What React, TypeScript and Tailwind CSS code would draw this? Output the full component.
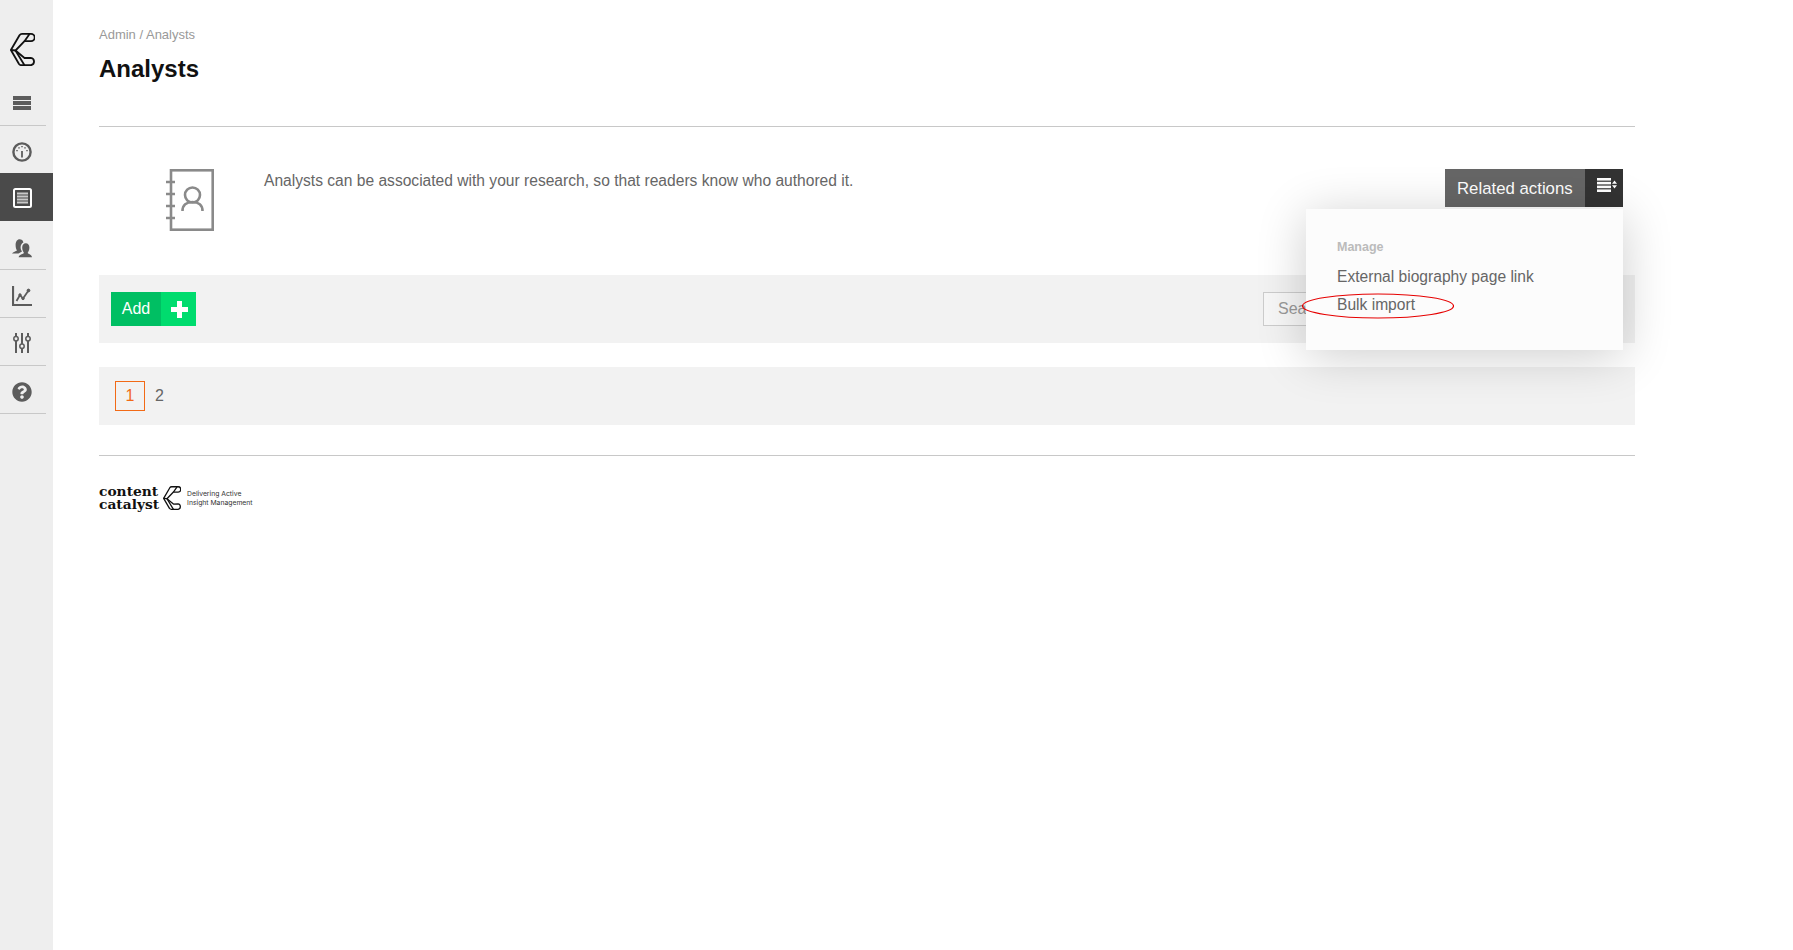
import React from "react";
import { FaQuestionCircle } from "react-icons/fa";

function Logo({ className }: { className: string }) {
  return (
    <svg viewBox="0 0 25 33" className={className} fill="none" stroke="currentColor" strokeWidth="1.8" strokeLinejoin="round">
      <path d="M0.9 17 L9.5 2.2 Q10.4 0.9 12 0.9 H21 A3.6 3.6 0 0 1 21 8.2 H14.5 L5.5 17.5 L14.5 25 L20.8 24.8 A3.75 3.75 0 0 1 21 32.2 H11.5 Q10 32.2 9 31 Z" />
      <path d="M0.9 17 L5.5 17.5 M5.5 17.5 L14.5 32.2 M14.5 8.2 L19.5 1" />
    </svg>
  );
}

function NavRule() {
  return <div className="h-px w-[46px] bg-[#c8c8c8]" />;
}

function NavCell({ active, children, className }: { active?: boolean; children: React.ReactNode; className: string }) {
  return (
    <div className={`flex items-center justify-center ${active ? "bg-[#4a4a4a] text-white" : "text-[#5c5c5c]"} ${className}`}>
      {children}
    </div>
  );
}

export default function App() {
  return (
    <div className="flex min-h-[950px] bg-white font-['Liberation_Sans',Arial,sans-serif] text-[#666]">
      <aside className="w-[53px] shrink-0 bg-[#eeeeee]">
        <div className="flex h-[82px] w-[45px] items-start justify-center pt-[33px] text-[#111]">
          <Logo className="h-[33px] w-[25px]" />
        </div>
        <NavCell className="h-[43px] w-[44px] pb-[1px]">
          <svg viewBox="0 0 18 14" className="h-[14px] w-[18px]" fill="currentColor">
            <rect width="18" height="4" />
            <rect y="5" width="18" height="4" />
            <rect y="10" width="18" height="4" />
          </svg>
        </NavCell>
        <NavRule />
        <NavCell className="h-[47px] w-[44px] pt-[5px]">
          <svg viewBox="0 0 20 20" className="h-[20px] w-[20px]" fill="none" stroke="currentColor">
            <circle cx="10" cy="10" r="8.6" strokeWidth="2.4" />
            <path d="M10 9 V15.5" strokeWidth="1.8" />
            <path d="M5 8 V9.2 M7 5.2 V6.4 M10 4 V5.2 M13 5.2 V6.4 M15 8 V9.2" strokeWidth="1.5" />
          </svg>
        </NavCell>
        <NavCell active className="h-[48px] w-[53px] pr-[9px] pt-[2px]">
          <svg viewBox="0 0 19 20" className="h-[20px] w-[19px]">
            <rect x="1" y="1" width="17" height="18" rx="1.5" fill="#4a4a4a" stroke="#fff" strokeWidth="2" />
            <path d="M4 5.5 H15 M4 8.5 H15 M4 11.5 H15 M4 14.5 H15" stroke="#c9c9c9" strokeWidth="2" />
          </svg>
        </NavCell>
        <NavCell className="h-[48px] w-[44px] pt-[6px]">
          <svg viewBox="0 0 20 20" className="h-[20px] w-[20px]" fill="currentColor">
            <path d="M0 15.5 C1 14 4 13.5 5 12.6 C4.2 11 3.6 9.6 3.6 7 C3.6 3.6 5.2 1.2 7.6 1.2 C9.6 1.2 11 2.4 11.4 4.4 C9.6 5.2 8.6 7 8.6 9.2 C8.6 11 9.2 12.4 10 13.4 C8.8 14 7.6 14.6 6.6 15.5 Z" />
            <path d="M6.6 19.2 C7 16.8 10.6 16.2 12 15 C11 13.6 10.2 12 10.2 9.6 C10.2 7 11.6 5.2 13.8 5.2 C16 5.2 17.4 7 17.4 9.6 C17.4 12 16.6 13.6 15.6 15 C17 16.2 19.6 16.8 20 19.2 Z" />
          </svg>
        </NavCell>
        <NavRule />
        <NavCell className="h-[47px] w-[44px] pt-[5px]">
          <svg viewBox="0 0 20 20" className="h-[20px] w-[20px]" fill="none" stroke="currentColor">
            <path d="M1 0 V19 H20" strokeWidth="2.2" />
            <path d="M4.5 15 L8 9 L11 12.5 L16.5 4.5" strokeWidth="1.8" />
            <circle cx="8" cy="9" r="1.2" fill="currentColor" />
            <circle cx="11" cy="12.5" r="1.2" fill="currentColor" />
            <circle cx="16.5" cy="4.5" r="1.4" fill="currentColor" />
          </svg>
        </NavCell>
        <NavRule />
        <NavCell className="h-[47px] w-[44px] pt-[3px]">
          <svg viewBox="0 0 18 20" className="h-[20px] w-[18px]" fill="none" stroke="currentColor" strokeWidth="2">
            <path d="M3 0 V3.5 M3 8 V20 M9 0 V11 M9 15.5 V20 M15 0 V3.5 M15 8 V20" />
            <circle cx="3" cy="5.8" r="2.2" strokeWidth="1.5" />
            <circle cx="9" cy="13.2" r="2.2" strokeWidth="1.5" />
            <circle cx="15" cy="5.8" r="2.2" strokeWidth="1.5" />
          </svg>
        </NavCell>
        <NavRule />
        <NavCell className="h-[47px] w-[44px] pt-[4px]">
          <FaQuestionCircle className="h-[20px] w-[20px]" />
        </NavCell>
        <NavRule />
      </aside>

      <main className="relative ml-[46px] w-[1536px]">
        <div className="pt-[27px] text-[13px] leading-[16px] text-[#999]">Admin / Analysts</div>
        <h1 className="mt-[11px] text-[24px] font-bold leading-[30px] text-[#111]">Analysts</h1>
        <div className="mt-[42px] h-px bg-[#c8c8c8]" />

        <div className="relative flex h-[148px] items-start">
          <svg viewBox="0 0 48 62" className="ml-[67px] mt-[42px] h-[62px] w-[48px] text-[#8a8a8a]" fill="none" stroke="currentColor">
            <rect x="5" y="1.3" width="41.7" height="59.4" strokeWidth="2.6" />
            <path d="M0 13 H9 M0 25 H9 M0 37 H9 M0 49 H9" strokeWidth="2.6" />
            <circle cx="26.5" cy="26" r="7.5" strokeWidth="2.6" />
            <path d="M16.5 42 C16.5 36 20.5 33 26.5 33 C32.5 33 36.5 36 36.5 42" strokeWidth="2.6" />
          </svg>
          <p className="ml-[50px] mt-[44px] text-[15.6px] leading-[20px] text-[#666]">
            Analysts can be associated with your research, so that readers know who authored it.
          </p>
          <div className="absolute right-[12px] top-[42px] flex h-[38px] w-[178px] text-white">
            <div className="flex w-[140px] items-center pl-[12px] pt-[1px] text-[16.8px] bg-[#666]">Related actions</div>
            <div className="flex w-[38px] items-start justify-center bg-[#333] pl-[5px] pt-[9px]">
              <svg viewBox="0 0 20 14" className="h-[14px] w-[20px]" fill="#fff">
                <rect width="14" height="2.6" />
                <rect y="3.8" width="14" height="2.6" />
                <rect y="7.6" width="14" height="2.6" />
                <rect y="11.4" width="14" height="2.6" />
                <path d="M15 5.8 L17.5 2.6 L20 5.8 Z M15 7.2 L20 7.2 L17.5 10.4 Z" />
              </svg>
            </div>
          </div>
        </div>

        <div className="flex h-[68px] items-center justify-between bg-[#f2f2f2] px-[12px]">
          <div className="flex h-[34px] text-white">
            <div className="flex w-[50px] items-center justify-center bg-[#00bf63] text-[16px]">Add</div>
            <div className="flex w-[35px] items-center justify-center bg-[#00dc6e] pl-[2px]">
              <svg viewBox="0 0 17 17" className="h-[17px] w-[17px]" fill="#fff">
                <path d="M6 0 H11 V6 H17 V11 H11 V17 H6 V11 H0 V6 H6 Z" />
              </svg>
            </div>
          </div>
          <div className="mr-[160px] flex h-[34px] w-[200px] items-center border border-[#ccc] bg-[#f7f7f7] pl-[14px] text-[16px] text-[#999]">Search</div>
        </div>

        <div className="mt-[24px] flex h-[58px] items-center gap-[10px] bg-[#f2f2f2] pl-[16px] text-[16px]">
          <div className="flex h-[30px] w-[30px] items-center justify-center border border-[#f26a16] text-[#f26a16]">1</div>
          <div className="text-[#666]">2</div>
        </div>

        <div className="mt-[30px] h-px bg-[#c8c8c8]" />

        <div className="mt-[29px] flex items-center">
          <div className="font-['DejaVu_Serif',serif] text-[13.8px] font-bold leading-[13px] text-[#111]">
            <div>content</div>
            <div>catalyst</div>
          </div>
          <Logo className="ml-[4px] h-[24px] w-[18px] text-[#111]" />
          <div className="ml-[6px] font-['Inter',sans-serif] text-[6.8px] leading-[9px] text-[#333]">
            <div>Delivering Active</div>
            <div>Insight Management</div>
          </div>
        </div>

        <div className="absolute left-[1207px] top-[209px] h-[141px] w-[317px] bg-[#fcfcfc] pl-[31px] pt-[30px] shadow-[0_6px_50px_rgba(0,0,0,0.2)]">
          <div className="text-[12.5px] font-bold leading-[16px] text-[#bbb]">Manage</div>
          <div className="mt-[12px] text-[15.6px] leading-[20px] text-[#666]">External biography page link</div>
          <div className="mt-[8px] text-[15.6px] leading-[20px] text-[#666]">Bulk import</div>
        </div>

        <svg viewBox="0 0 152 26" className="absolute left-[1203px] top-[293px] h-[26px] w-[152px]" fill="none">
          <ellipse cx="76" cy="13" rx="75.5" ry="12" stroke="#e60000" strokeWidth="1.2" />
        </svg>
      </main>
    </div>
  );
}
